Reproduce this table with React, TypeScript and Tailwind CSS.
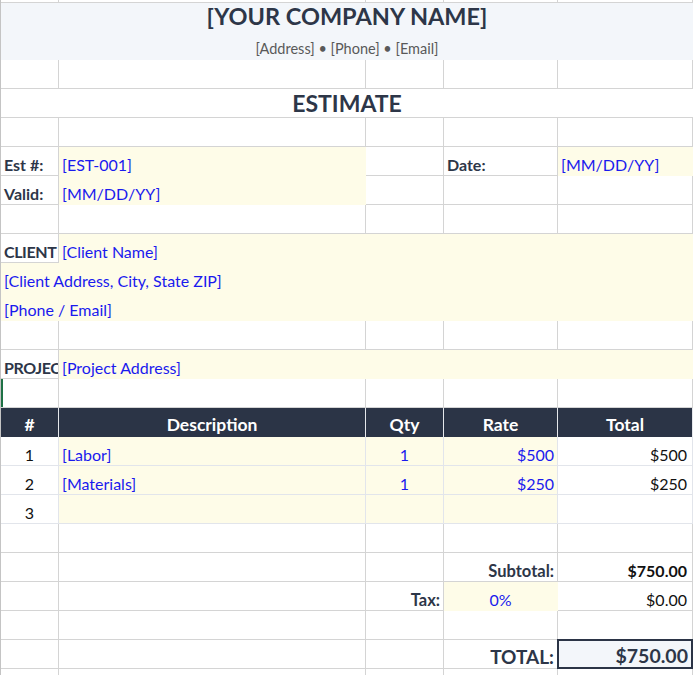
const cols = 'grid grid-cols-[58px_307px_78px_114px_135px]';
const base = 'flex items-end px-[3px] pb-[2px] overflow-hidden whitespace-nowrap leading-none';
const grid = 'border-r border-b border-[#d4d4d4]';
const fill = 'bg-[#fefce8] border-r border-b border-transparent';
const item = 'border-r border-b border-[#e2e5eb]';
const label = 'font-bold text-[#2d3648]';
const input = 'text-[#1a1aee]';

function Blank({ fillCols = [] as number[] }) {
  return (
    <div className={`${cols} h-[29px]`}>
      {[0, 1, 2, 3, 4].map((i) => (
        <div key={i} className={fillCols.includes(i) ? fill : grid} />
      ))}
    </div>
  );
}

export default function App() {
  return (
    <div className="h-[675px] w-[693px] overflow-hidden bg-white border-l border-[#c4c4c4] font-['Lato',sans-serif] text-[16px]">
      {/* cut-off row above */}
      <div className={`${cols} h-[3px]`}>
        <div className={grid} />
        <div className={grid} />
        <div className={grid} />
        <div className={grid} />
        <div className={grid} />
      </div>

      {/* company header */}
      <div className="h-[57px] bg-[#f3f6fa] flex flex-col">
        <div className="h-[29px] flex items-center justify-center pb-[2px] text-[23.5px] font-bold text-[#2d3648] leading-none">
          [YOUR COMPANY NAME]
        </div>
        <div className="h-[28px] flex items-end justify-center pb-[4px] text-[14.5px] text-[#595959] leading-none">
          [Address] • [Phone] • [Email]
        </div>
      </div>

      <Blank />

      <div className="h-[29px] border-b border-[#d4d4d4] flex items-center justify-center text-[23px] font-bold text-[#2d3648] leading-none">
        ESTIMATE
      </div>

      <Blank />

      {/* estimate info */}
      <div className={`${cols} h-[29px]`}>
        <div className={`${grid} ${base} ${label}`}>Est #:</div>
        <div className={`${fill} ${base} ${input}`}>[EST-001]</div>
        <div className={grid} />
        <div className={`${grid} ${base} ${label}`}>Date:</div>
        <div className={`${fill} ${base} ${input}`}>[MM/DD/YY]</div>
      </div>
      <div className={`${cols} h-[29px]`}>
        <div className={`${grid} ${base} ${label}`}>Valid:</div>
        <div className={`${fill} ${base} ${input}`}>[MM/DD/YY]</div>
        <div className={grid} />
        <div className={grid} />
        <div className={grid} />
      </div>

      <Blank />

      {/* client */}
      <div className={`${cols} h-[29px]`}>
        <div className={`${grid} ${base} ${label} tracking-[-0.4px]`}>CLIENT</div>
        <div className={`col-span-4 ${fill} ${base} ${input}`}>[Client Name]</div>
      </div>
      <div className={`h-[29px] ${fill} ${base} ${input}`}>[Client Address, City, State ZIP]</div>
      <div className={`h-[29px] ${fill} ${base} ${input}`}>[Phone / Email]</div>

      <Blank />

      <div className={`${cols} h-[29px]`}>
        <div className={`${grid} ${base} ${label} tracking-[-0.4px]`}>PROJEC</div>
        <div className={`col-span-4 ${fill} ${base} ${input}`}>[Project Address]</div>
      </div>

      <div className={`${cols} h-[29px]`}>
        <div className={`${grid} shadow-[inset_2px_0_0_#1e7145]`} />
        <div className={grid} />
        <div className={grid} />
        <div className={grid} />
        <div className={grid} />
      </div>

      {/* line items */}
      <div className={`${cols} h-[29px] bg-[#2b3446] text-white font-bold text-[17.5px]`}>
        {['#', 'Description', 'Qty', 'Rate', 'Total'].map((h) => (
          <div
            key={h}
            className="border-r border-[#e5e7eb] flex items-end justify-center pb-[4px] leading-none"
          >
            {h}
          </div>
        ))}
      </div>
      {[
        { n: '1', desc: '[Labor]', qty: '1', rate: '$500', total: '$500' },
        { n: '2', desc: '[Materials]', qty: '1', rate: '$250', total: '$250' },
        { n: '3', desc: '', qty: '', rate: '', total: '' },
      ].map((r) => (
        <div key={r.n} className={`${cols} h-[29px]`}>
          <div className={`${item} ${base} justify-center text-[#111]`}>{r.n}</div>
          <div className={`${item} bg-[#fefce8] ${base} ${input}`}>{r.desc}</div>
          <div className={`${item} bg-[#fefce8] ${base} justify-center ${input}`}>{r.qty}</div>
          <div className={`${item} bg-[#fefce8] ${base} justify-end ${input}`}>{r.rate}</div>
          <div className={`${item} ${base} justify-end pr-[5px] text-[#111]`}>{r.total}</div>
        </div>
      ))}

      <Blank />

      {/* totals */}
      <div className={`${cols} h-[29px]`}>
        <div className={grid} />
        <div className={grid} />
        <div className={grid} />
        <div className={`${grid} ${base} justify-end text-[16.5px] ${label}`}>Subtotal:</div>
        <div className={`${grid} ${base} justify-end pr-[5px] font-bold text-[#111]`}>$750.00</div>
      </div>
      <div className={`${cols} h-[29px]`}>
        <div className={grid} />
        <div className={grid} />
        <div className={`${grid} ${base} justify-end text-[16.5px] ${label}`}>Tax:</div>
        <div className={`${fill} ${base} justify-center ${input}`}>0%</div>
        <div className={`${grid} ${base} justify-end pr-[5px] text-[#111]`}>$0.00</div>
      </div>

      <Blank />

      <div className={`${cols} h-[29px]`}>
        <div className={grid} />
        <div className={grid} />
        <div className={grid} />
        <div className={`${grid} ${base} justify-end text-[19px] ${label}`}>TOTAL:</div>
        <div className="border-2 border-[#2b3446] bg-[#f3f6fa] -ml-[1px] -mt-[1px] h-[30px] flex items-end justify-end pr-[3px] pb-[2px] text-[19.5px] font-bold text-[#2d3648] leading-none">
          $750.00
        </div>
      </div>

      <Blank />
    </div>
  );
}
